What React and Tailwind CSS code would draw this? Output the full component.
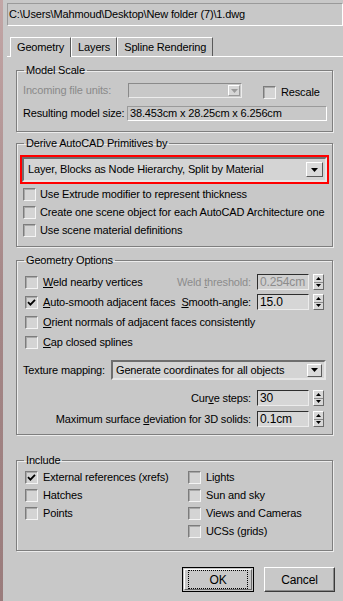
import React from 'react';

// classic Win32 dialog bits
const Check = ({ checked }) => (
  <span className="w-[13px] h-[13px] shrink-0 flex items-center justify-center bg-[#d4d4d4] border border-t-[#7c7c7c] border-l-[#7c7c7c] border-b-[#f4f4f4] border-r-[#f4f4f4] shadow-[inset_1px_1px_0_#a8a8a8]">
    {checked && (
      <svg width="9" height="9" viewBox="0 0 9 9">
        <path d="M1 4.2 L3.4 6.6 L8 1.8" stroke="#000" strokeWidth="1.8" fill="none" />
      </svg>
    )}
  </span>
);

const CheckRow = ({ checked, children, gap = 'gap-[5px]', h = 'h-[18px]' }) => (
  <div className={`flex items-center ${gap} ${h}`}>
    <Check checked={checked} />
    <span className="whitespace-nowrap">{children}</span>
  </div>
);

const Arrow = ({ color = '#000' }) => (
  <svg width="7" height="4" viewBox="0 0 7 4">
    <path d="M0 0 H7 L3.5 4 Z" fill={color} />
  </svg>
);

const Spinner = ({ value, disabled }) => (
  <div className="flex items-center gap-[4px]">
    <div
      className={`w-[52px] h-[16px] flex items-center px-[2px] border border-t-[#2e2e2e] border-l-[#2e2e2e] border-b-[#ececec] border-r-[#ececec] text-[12px] ${
        disabled ? 'bg-[#cfcfcf] text-[#8c8c8c]' : 'bg-[#d6d6d6] text-black'
      }`}
    >
      {value}
    </div>
    <div className="w-[11px] h-[16px] flex flex-col bg-[#d8d8d8] border border-t-white border-l-white border-b-[#6a6a6a] border-r-[#6a6a6a]">
      <div className="flex-1 flex items-center justify-center border-b border-[#8a8a8a]">
        <svg width="5" height="3" viewBox="0 0 5 3"><path d="M0 3 H5 L2.5 0 Z" fill="#000" /></svg>
      </div>
      <div className="flex-1 flex items-center justify-center">
        <svg width="5" height="3" viewBox="0 0 5 3"><path d="M0 0 H5 L2.5 3 Z" fill="#000" /></svg>
      </div>
    </div>
  </div>
);

const Group = ({ title, className = '', children }) => (
  <fieldset
    className={`w-[317px] border border-[#7e7e7e] shadow-[inset_1px_1px_0_#ececec,1px_1px_0_#ececec] ${className}`}
  >
    <legend className="ml-[7px] px-[2px] leading-[14px]">{title}</legend>
    {children}
  </fieldset>
);

const Tab = ({ active, children }) => (
  <div
    className={`h-[19px] px-[6px] flex items-center border-t border-l border-r border-t-white border-l-white border-r-[#5a5a5a] ${
      active ? 'relative z-10 -mb-px h-[20px] bg-[#c8c8c8]' : ''
    }`}
  >
    {children}
  </div>
);

export default function App() {
  return (
    <div
      className="w-[343px] h-[601px] flex bg-[#c8c8c8] text-[11px] tracking-[-0.15px] text-black overflow-hidden"
      style={{ fontFamily: '"Liberation Sans", Arial, sans-serif' }}
    >
      <div className="w-[3px] shrink-0 bg-gradient-to-b from-[#c2a6a6] via-[#a48686] to-[#9a7c7c]" />

      <div className="flex-1 flex flex-col">
        {/* file path */}
        <div className="ml-[4px] mt-[3px] h-[23px] flex items-center pl-[1px] border border-t-[#9a9a9a] border-l-[#9a9a9a] border-b-white border-r-white whitespace-nowrap">
          C:\Users\Mahmoud\Desktop\New folder (7)\1.dwg
        </div>

        {/* tabs */}
        <div className="ml-[7px] mt-[11px] flex items-end">
          <Tab active>Geometry</Tab>
          <Tab>Layers</Tab>
          <Tab>Spline Rendering</Tab>
        </div>

        <div className="ml-[4px] border-t border-white flex flex-col pl-[9px]">
          <Group title="Model Scale" className="mt-[6px]">
            <div className="mt-[6px] h-[15px] flex items-center pl-[6px]">
              <span className="w-[105px] text-[#8a8a8a] whitespace-nowrap">Incoming file units:</span>
              <div className="w-[114px] h-[15px] flex items-center justify-end pr-[1px] border border-t-[#8a8a8a] border-l-[#8a8a8a] border-b-[#ececec] border-r-[#ececec]">
                <div className="w-[12px] h-[11px] flex items-center justify-center bg-[#d6d6d6] border border-t-white border-l-white border-b-[#9a9a9a] border-r-[#9a9a9a]">
                  <Arrow color="#9a9a9a" />
                </div>
              </div>
              <div className="ml-[21px] flex items-center gap-[5px] mt-[3px]">
                <Check />
                <span>Rescale</span>
              </div>
            </div>
            <div className="mt-[8px] h-[15px] flex items-center pl-[6px] pb-0">
              <span className="w-[104px] whitespace-nowrap">Resulting model size:</span>
              <div className="w-[200px] h-[15px] flex items-center px-[2px] border border-t-[#9a9a9a] border-l-[#9a9a9a] border-b-white border-r-white whitespace-nowrap">
                38.453cm x 28.25cm x 6.256cm
              </div>
            </div>
            <div className="h-[10px]" />
          </Group>

          <Group title="Derive AutoCAD Primitives by" className="mt-[4px]">
            <div className="mt-[5px] ml-[3px] w-[309px] h-[29px] border-2 border-[#ff0000]">
              <div className="h-full flex items-center justify-between pl-[4px] pr-[2px] bg-[#d4d4d4] border-2 border-t-[#6e6e6e] border-l-[#6e6e6e] border-b-[#e6e6e6] border-r-[#e6e6e6]">
                <span className="whitespace-nowrap">Layer, Blocks as Node Hierarchy, Split by Material</span>
                <div className="w-[17px] h-[15px] flex items-center justify-center bg-[#dadada] border border-t-white border-l-white border-b-[#5a5a5a] border-r-[#5a5a5a]">
                  <Arrow />
                </div>
              </div>
            </div>
            <div className="mt-[1px] pl-[6px] flex flex-col">
              <CheckRow gap="gap-[4px]">Use Extrude modifier to represent thickness</CheckRow>
              <CheckRow gap="gap-[4px]">Create one scene object for each AutoCAD Architecture one</CheckRow>
              <CheckRow gap="gap-[4px]">Use scene material definitions</CheckRow>
            </div>
            <div className="h-[7px]" />
          </Group>

          <Group title="Geometry Options" className="mt-[6px]">
            <div className="mt-[5px] pl-[8px] pr-[8px] flex flex-col">
              <div className="h-[20px] flex items-center justify-between">
                <CheckRow h="h-[20px]"><u>W</u>eld nearby vertices</CheckRow>
                <div className="flex items-center gap-[6px]">
                  <span className="text-[#8c8c8c]">Weld <u>t</u>hreshold:</span>
                  <Spinner value="0.254cm" disabled />
                </div>
              </div>
              <div className="h-[20px] flex items-center justify-between">
                <CheckRow checked h="h-[20px]"><u>A</u>uto-smooth adjacent faces</CheckRow>
                <div className="flex items-center gap-[6px]">
                  <span><u>S</u>mooth-angle:</span>
                  <Spinner value="15.0" />
                </div>
              </div>
              <CheckRow h="h-[20px]"><u>O</u>rient normals of adjacent faces consistently</CheckRow>
              <CheckRow h="h-[20px]"><u>C</u>ap closed splines</CheckRow>
            </div>

            <div className="mt-[8px] h-[20px] pl-[6px] flex items-center">
              <span className="w-[88px] whitespace-nowrap">Texture mapping:</span>
              <div className="w-[215px] h-[20px] flex items-center justify-between pl-[3px] pr-[2px] bg-[#d4d4d4] border-2 border-t-[#6e6e6e] border-l-[#6e6e6e] border-b-[#e6e6e6] border-r-[#e6e6e6]">
                <span className="whitespace-nowrap">Generate coordinates for all objects</span>
                <div className="w-[15px] h-[13px] flex items-center justify-center bg-[#dadada] border border-t-white border-l-white border-b-[#5a5a5a] border-r-[#5a5a5a]">
                  <Arrow />
                </div>
              </div>
            </div>

            <div className="mt-[10px] h-[16px] pr-[8px] flex items-center justify-end gap-[6px]">
              <span>Cur<u>v</u>e steps:</span>
              <Spinner value="30" />
            </div>
            <div className="mt-[5px] h-[16px] pr-[8px] flex items-center justify-end gap-[6px]">
              <span>Maximum surface <u>d</u>eviation for 3D solids:</span>
              <Spinner value="0.1cm" />
            </div>
            <div className="h-[7px]" />
          </Group>

          <Group title="Include" className="mt-[18px]">
            <div className="mt-[1px] pl-[8px] flex">
              <div className="w-[163px] flex flex-col">
                <CheckRow checked>External references (xrefs)</CheckRow>
                <CheckRow>Hatches</CheckRow>
                <CheckRow>Points</CheckRow>
              </div>
              <div className="flex flex-col">
                <CheckRow>Lights</CheckRow>
                <CheckRow>Sun and sky</CheckRow>
                <CheckRow>Views and Cameras</CheckRow>
                <CheckRow>UCSs (grids)</CheckRow>
              </div>
            </div>
            <div className="h-[10px]" />
          </Group>
        </div>

        {/* buttons */}
        <div className="mt-[16px] pr-[8px] flex justify-end gap-[10px] text-[12px]">
          <button className="w-[72px] h-[25px] p-[1px] border border-black bg-[#c8c8c8]">
            <div className="w-full h-full flex items-center justify-center border border-t-white border-l-white border-b-[#6a6a6a] border-r-[#6a6a6a]">
              <div className="px-[14px] py-[1px] outline-1 outline-dotted outline-black w-[58px] h-[17px] flex items-center justify-center">
                OK
              </div>
            </div>
          </button>
          <button className="w-[71px] h-[25px] flex items-center justify-center bg-[#c8c8c8] border border-t-white border-l-white border-b-[#3a3a3a] border-r-[#3a3a3a] shadow-[inset_-1px_-1px_0_#8a8a8a]">
            Cancel
          </button>
        </div>
      </div>
    </div>
  );
}
